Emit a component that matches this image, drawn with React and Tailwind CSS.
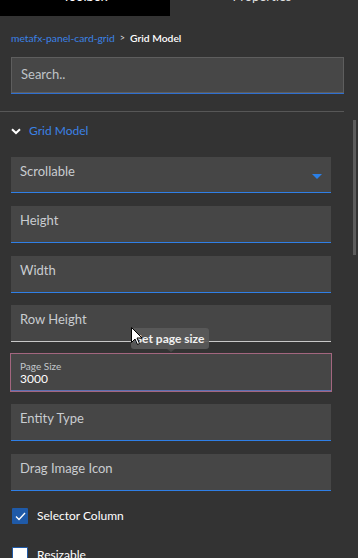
import React from "react";

function Field({ label, mt, border = "border-[#2f7fe6]" }) {
  return (
    <div className={`${mt} h-[37px] w-[320px] bg-[#464646] border-b ${border} px-[9px] pt-[5px]`}>
      <div className="text-[13px] leading-[18px] text-[#c9ccd0]">{label}</div>
    </div>
  );
}

export default function App() {
  return (
    <div
      className="relative w-[358px] h-[558px] bg-[#333333] overflow-hidden"
      style={{ fontFamily: "Lato, 'Noto Sans', sans-serif" }}
    >
      {/* tabs */}
      <div className="flex h-4">
        <div className="w-[170px] bg-black overflow-hidden flex justify-center">
          <div className="-mt-[12px] text-[13px] leading-[16px] text-white">Toolbox</div>
        </div>
        <div className="flex-1 overflow-hidden flex justify-center pr-[4px]">
          <div className="-mt-[12px] text-[13px] leading-[16px] text-[#ddd]">Properties</div>
        </div>
      </div>

      {/* breadcrumb */}
      <div className="pl-[11px] mt-[15px] flex items-center h-[14px] text-[10.3px] leading-[14px]">
        <span className="text-[#3b82e6]">metafx-panel-card-grid</span>
        <span className="text-[#ddd] mx-[5px] text-[9px]">&gt;</span>
        <span className="text-white font-semibold">Grid Model</span>
      </div>

      {/* search */}
      <div className="ml-[11px] mt-[12px] w-[333px]">
        <div className="h-[36px] bg-[#474747] border border-[#5e5e5e] flex items-center px-[9px]">
          <span className="text-[13px] text-[#bfc3c8]">Search..</span>
        </div>
        <div className="h-px bg-[#2f6fd0]" />
      </div>

      <div className="mt-[17px] w-[344px] h-px bg-[#575757]" />

      <div className="flex">
        <div className="flex-1 pl-[11px]">
          {/* section header */}
          <div className="flex items-center h-[14px] mt-[12px]">
            <svg width="10" height="7" viewBox="0 0 10 7" className="mr-[8px]">
              <path d="M1 1.2 L5 5 L9 1.2" stroke="white" strokeWidth="2" fill="none" />
            </svg>
            <span className="text-[12px] text-[#3b82e6]">Grid Model</span>
          </div>

          <div className="flex flex-col">
            <div className="mt-[19px] relative h-[36px] w-[320px] bg-[#464646] border-b border-[#2f7fe6] px-[9px] pt-[5px]">
              <div className="text-[13px] leading-[18px] text-[#c9ccd0]">Scrollable</div>
              <svg width="10" height="5" viewBox="0 0 10 5" className="absolute left-[301px] top-[17px]">
                <path d="M0 0 L10 0 L5 5 Z" fill="#2a7fe6" />
              </svg>
            </div>
            <Field label="Height" mt="mt-[13px]" />
            <Field label="Width" mt="mt-[13px]" />
            <Field label="Row Height" mt="mt-[12px]" border="border-[#c8c8c8]" />
            <div className="mt-[12px] h-[37px] w-[320px] bg-[#464646] border-b border-[#5d6fb0] outline outline-1 outline-[#a3667f] px-[9px] pt-[6px]">
              <div className="text-[10px] leading-[12px] text-[#c2c6cb]">Page Size</div>
              <div className="text-[12px] leading-[14px] text-white">3000</div>
            </div>
            <Field label="Entity Type" mt="mt-[13px]" />
            <Field label="Drag Image Icon" mt="mt-[13px]" />
          </div>

          <div className="mt-[17px] flex items-center h-[16px]">
            <div className="w-[16px] h-[16px] ml-[1px] bg-[#1f5aa8] rounded-[1px] flex items-center justify-center">
              <svg width="11" height="9" viewBox="0 0 11 9">
                <path d="M1 4.5 L4 7.5 L10 1" stroke="white" strokeWidth="1.3" fill="none" />
              </svg>
            </div>
            <span className="ml-[9px] text-[12px] text-white">Selector Column</span>
          </div>
          <div className="mt-[23px] flex items-center h-[16px]">
            <div className="w-[16px] h-[16px] ml-[1px] bg-white border border-[#1f5aa8] rounded-[1px]" />
            <span className="ml-[9px] text-[12px] text-white">Resizable</span>
          </div>
        </div>
        <div className="w-[14px]">
          <div className="ml-[9px] mt-[8px] w-[3px] h-[135px] bg-[#5c5c5c]" />
        </div>
      </div>

      {/* tooltip */}
      <div className="absolute left-[131px] top-[328px] w-[78px] h-[21px] bg-[#5a5a5a]/90 rounded-[3px] flex items-center justify-center">
        <span className="text-[12px] font-bold text-[#f0f0f0]">Set page size</span>
        <div className="absolute left-[36px] top-[21px] w-0 h-0 border-l-[4px] border-r-[4px] border-t-[3px] border-l-transparent border-r-transparent border-t-[#4a4a4a]" />
      </div>

      {/* cursor */}
      <svg className="absolute left-[131px] top-[327px]" width="12" height="19" viewBox="0 0 12 19">
        <path d="M0.5 0.5 L0.5 15.5 L4 12 L6.5 17.5 L8.5 16.5 L6 11 L11 11 Z" fill="white" stroke="black" strokeWidth="1" />
      </svg>
    </div>
  );
}
